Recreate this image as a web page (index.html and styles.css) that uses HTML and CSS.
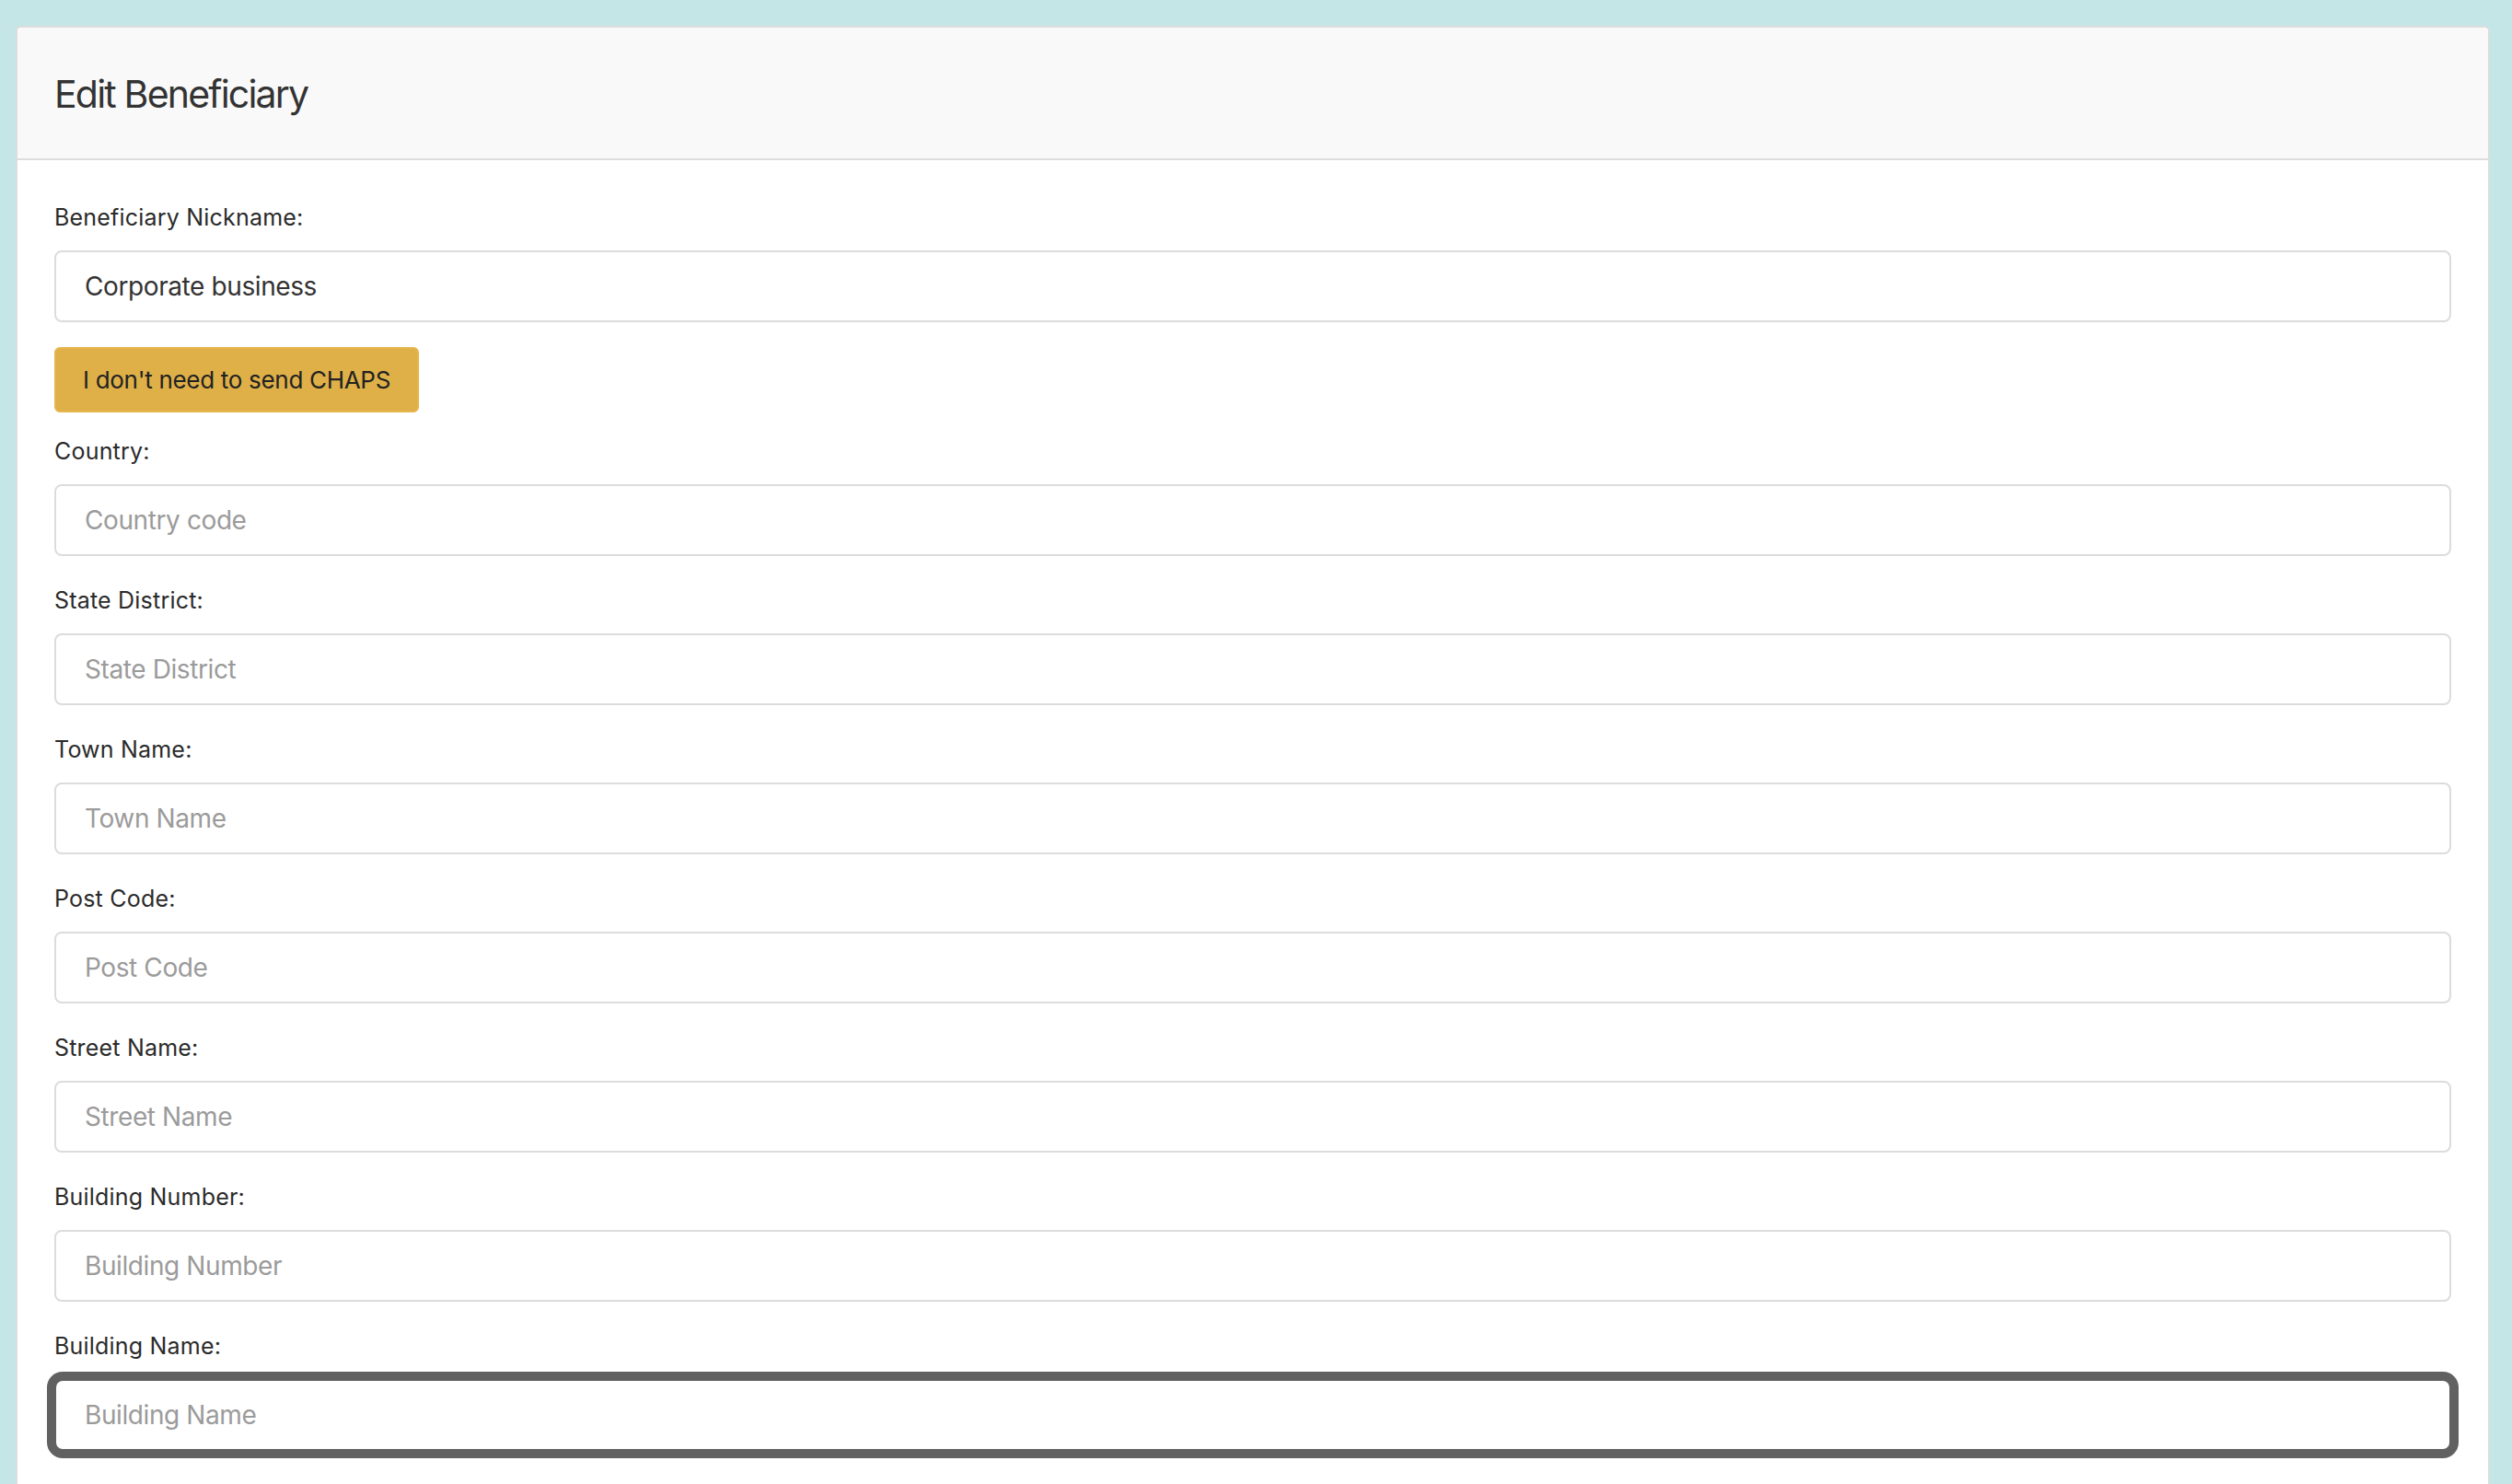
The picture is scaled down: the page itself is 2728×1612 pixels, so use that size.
FILE: index.html
```html
<!DOCTYPE html>
<html lang="en">
<head>
  <meta charset="UTF-8" />
  <meta name="viewport" content="width=device-width, initial-scale=1.0"/>
  <title>Edit Beneficiary</title>
  <link rel="stylesheet" href="styles.css">
</head>
<body>

  <div class="panel">
    <div class="panel-heading">
      <h1>Edit Beneficiary</h1>
    </div>

    <form class="panel-body">
      <div class="form-group">
        <label for="nickname">Beneficiary Nickname:</label>
        <input type="text" id="nickname" value="Corporate business" />
      </div>

      <div class="chaps-row">
        <button type="button" class="btn-warning">I don't need to send CHAPS</button>
      </div>

      <div class="form-group">
        <label for="country">Country:</label>
        <input type="text" id="country" placeholder="Country code" />
      </div>

      <div class="form-group">
        <label for="state">State District:</label>
        <input type="text" id="state" placeholder="State District" />
      </div>

      <div class="form-group">
        <label for="town">Town Name:</label>
        <input type="text" id="town" placeholder="Town Name" />
      </div>

      <div class="form-group">
        <label for="postcode">Post Code:</label>
        <input type="text" id="postcode" placeholder="Post Code" />
      </div>

      <div class="form-group">
        <label for="street">Street Name:</label>
        <input type="text" id="street" placeholder="Street Name" />
      </div>

      <div class="form-group">
        <label for="buildingNumber">Building Number:</label>
        <input type="text" id="buildingNumber" placeholder="Building Number" />
      </div>

      <div class="form-group">
        <label for="buildingName">Building Name:</label>
        <input type="text" id="buildingName" class="is-focused" placeholder="Building Name" />
      </div>
    </form>
  </div>

</body>
</html>
```

FILE: styles.css
```css
body {
  font-family: Inter, 'Noto Sans', 'Liberation Sans', sans-serif;
  background: #c4e6e6;
  color: #333;
  margin: 0;
  padding: 28px 24px 0 17px;
}

.panel {
  background-color: #fff;
  border: 2px solid #dddddd;
  border-radius: 6px;
}

.panel-heading {
  background-color: #f9f9f9;
  border-bottom: 2px solid #dddddd;
  border-radius: 6px 6px 0 0;
  padding: 50px 40px 47px;
}

.panel-heading h1 {
  margin: 0;
  font-size: 41px;
  font-weight: 400;
  line-height: 45px;
  letter-spacing: -1.8px;
  color: #333;
}

.panel-body {
  padding: 44px 40px 40px;
}

.form-group {
  margin-bottom: 30px;
}

.form-group:first-child {
  margin-bottom: 27px;
}

label {
  display: block;
  font-size: 25px;
  line-height: 36px;
  letter-spacing: 0.2px;
  margin-bottom: 18px;
  color: #2b2b2b;
}

input {
  display: block;
  box-sizing: border-box;
  width: 100%;
  height: 78px;
  padding: 0 31px;
  font-family: inherit;
  font-size: 28px;
  letter-spacing: -0.4px;
  color: #333;
  background: #fff;
  border: 2px solid #dcdcdc;
  border-radius: 8px;
  outline: none;
}

input::placeholder {
  color: #9b9b9b;
}

input.is-focused {
  border-color: #616161;
  box-shadow: 0 0 0 8px #616161;
  border-radius: 9px;
}

.chaps-row {
  margin-bottom: 24px;
}

.btn-warning {
  display: inline-block;
  height: 71px;
  padding: 0 29px;
  font-family: inherit;
  font-size: 26px;
  letter-spacing: -0.3px;
  color: #222;
  background-color: #dfb048;
  border: 2px solid #e6b54c;
  border-radius: 6px;
  cursor: pointer;
}
```
